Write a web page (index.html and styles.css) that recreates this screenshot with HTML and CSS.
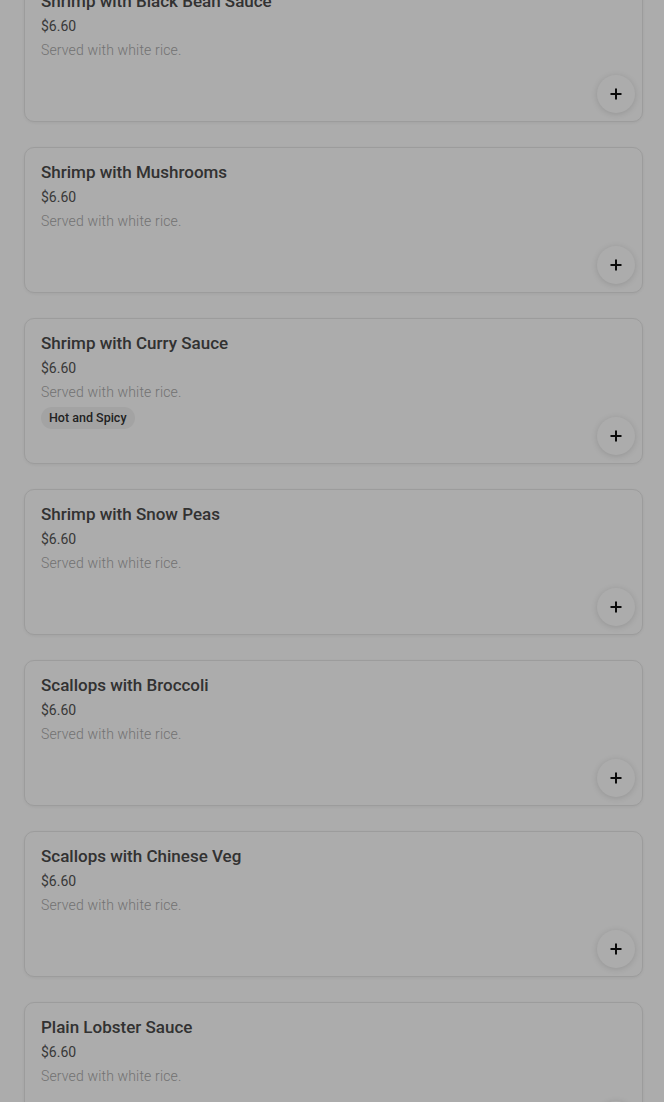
FILE: index.html
```html
<!DOCTYPE html>
<html lang="en">
<head>
    <meta charset="UTF-8">
    <meta name="viewport" content="width=device-width, initial-scale=1.0">
    <title>Seafood</title>
    <link rel="stylesheet" href="styles.css">
</head>
<body>
    <div class="menu-list">
        <div class="item-card">
            <div class="item-name">Shrimp with Black Bean Sauce</div>
            <div class="item-price">$6.60</div>
            <div class="item-desc">Served with white rice.</div>
            <button class="add-btn"><svg width="12" height="12" viewBox="0 0 12 12"><path d="M6 0.5v11M0.5 6h11" stroke="#111" stroke-width="2"/></svg></button>
        </div>

        <div class="item-card">
            <div class="item-name">Shrimp with Mushrooms</div>
            <div class="item-price">$6.60</div>
            <div class="item-desc">Served with white rice.</div>
            <button class="add-btn"><svg width="12" height="12" viewBox="0 0 12 12"><path d="M6 0.5v11M0.5 6h11" stroke="#111" stroke-width="2"/></svg></button>
        </div>

        <div class="item-card">
            <div class="item-name">Shrimp with Curry Sauce</div>
            <div class="item-price">$6.60</div>
            <div class="item-desc">Served with white rice.</div>
            <span class="tag">Hot and Spicy</span>
            <button class="add-btn"><svg width="12" height="12" viewBox="0 0 12 12"><path d="M6 0.5v11M0.5 6h11" stroke="#111" stroke-width="2"/></svg></button>
        </div>

        <div class="item-card">
            <div class="item-name">Shrimp with Snow Peas</div>
            <div class="item-price">$6.60</div>
            <div class="item-desc">Served with white rice.</div>
            <button class="add-btn"><svg width="12" height="12" viewBox="0 0 12 12"><path d="M6 0.5v11M0.5 6h11" stroke="#111" stroke-width="2"/></svg></button>
        </div>

        <div class="item-card">
            <div class="item-name">Scallops with Broccoli</div>
            <div class="item-price">$6.60</div>
            <div class="item-desc">Served with white rice.</div>
            <button class="add-btn"><svg width="12" height="12" viewBox="0 0 12 12"><path d="M6 0.5v11M0.5 6h11" stroke="#111" stroke-width="2"/></svg></button>
        </div>

        <div class="item-card">
            <div class="item-name">Scallops with Chinese Veg</div>
            <div class="item-price">$6.60</div>
            <div class="item-desc">Served with white rice.</div>
            <button class="add-btn"><svg width="12" height="12" viewBox="0 0 12 12"><path d="M6 0.5v11M0.5 6h11" stroke="#111" stroke-width="2"/></svg></button>
        </div>

        <div class="item-card">
            <div class="item-name">Plain Lobster Sauce</div>
            <div class="item-price">$6.60</div>
            <div class="item-desc">Served with white rice.</div>
            <button class="add-btn"><svg width="12" height="12" viewBox="0 0 12 12"><path d="M6 0.5v11M0.5 6h11" stroke="#111" stroke-width="2"/></svg></button>
        </div>
    </div>

    <!-- modal backdrop -->
    <div class="backdrop"></div>
</body>
</html>
```

FILE: styles.css
```css
body {
    margin: 0;
    font-family: Roboto, "Noto Sans", sans-serif;
    background-color: white;
    overflow: hidden;
}

.menu-list {
    display: flex;
    flex-direction: column;
    gap: 25px;
    padding: 0 21px 0 24px;
    margin-top: -24px;
}

.item-card {
    position: relative;
    height: 146px;
    box-sizing: border-box;
    padding: 14px 16px 16px;
    border: 1px solid #e8e8e8;
    border-radius: 10px;
    box-shadow: 0 1px 3px rgba(0,0,0,0.06);
    background-color: white;
}

.item-name {
    font-size: 17px;
    line-height: 20px;
    font-weight: 500;
    color: #4a4a4a;
}

.item-price {
    margin-top: 5px;
    font-size: 14px;
    line-height: 20px;
    color: #555;
}

.item-desc {
    margin-top: 4px;
    font-size: 14px;
    line-height: 20px;
    font-weight: 300;
    letter-spacing: 0.15px;
    color: #aaa;
}

.tag {
    display: inline-block;
    margin-top: 5px;
    padding: 0 8px;
    font-size: 12.5px;
    line-height: 22px;
    font-weight: 500;
    color: #333;
    background-color: #f2f2f2;
    border-radius: 11px;
}

.add-btn {
    position: absolute;
    right: 7px;
    bottom: 8px;
    width: 38px;
    height: 38px;
    padding: 0;
    border: none;
    border-radius: 50%;
    background-color: white;
    box-shadow: 0 1px 6px rgba(0,0,0,0.14);
    display: flex;
    align-items: center;
    justify-content: center;
    cursor: pointer;
}

.backdrop {
    position: fixed;
    inset: 0;
    background-color: rgba(0,0,0,0.325);
}
```
